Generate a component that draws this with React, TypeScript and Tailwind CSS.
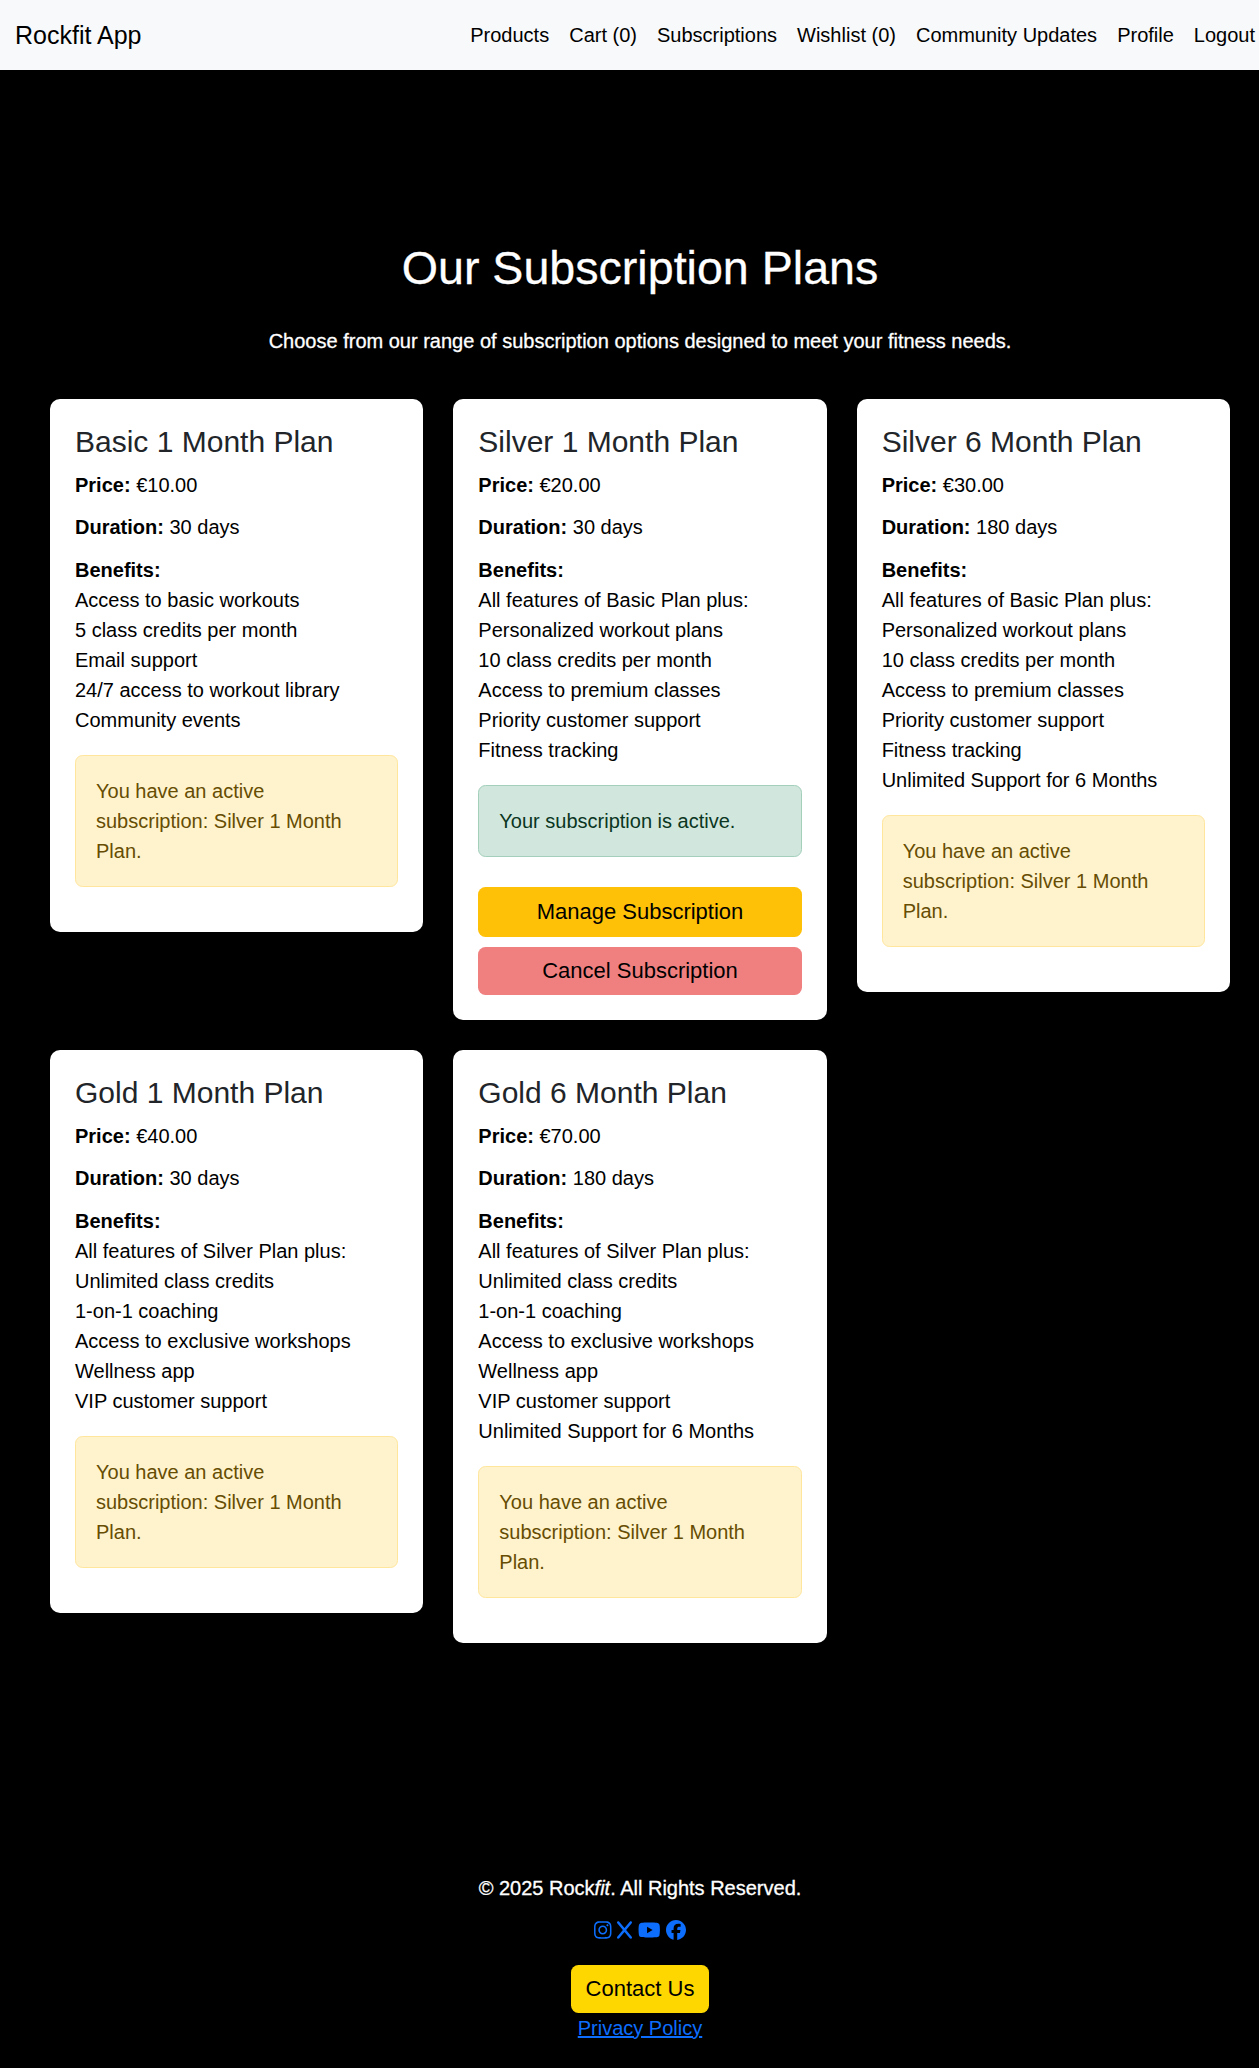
import React from "react";
import { FaInstagram, FaYoutube, FaFacebook, FaX } from "react-icons/fa6";

type Plan = {
  name: string;
  price: string;
  days: number;
  benefits: string[];
  active?: boolean;
};

const silver = [
  "All features of Basic Plan plus:",
  "Personalized workout plans",
  "10 class credits per month",
  "Access to premium classes",
  "Priority customer support",
  "Fitness tracking",
];

const gold = [
  "All features of Silver Plan plus:",
  "Unlimited class credits",
  "1-on-1 coaching",
  "Access to exclusive workshops",
  "Wellness app",
  "VIP customer support",
];

const plans: Plan[] = [
  {
    name: "Basic 1 Month Plan",
    price: "€10.00",
    days: 30,
    benefits: [
      "Access to basic workouts",
      "5 class credits per month",
      "Email support",
      "24/7 access to workout library",
      "Community events",
    ],
  },
  { name: "Silver 1 Month Plan", price: "€20.00", days: 30, benefits: silver, active: true },
  { name: "Silver 6 Month Plan", price: "€30.00", days: 180, benefits: [...silver, "Unlimited Support for 6 Months"] },
  { name: "Gold 1 Month Plan", price: "€40.00", days: 30, benefits: gold },
  { name: "Gold 6 Month Plan", price: "€70.00", days: 180, benefits: [...gold, "Unlimited Support for 6 Months"] },
];

const links = ["Products", "Cart (0)", "Subscriptions", "Wishlist (0)", "Community Updates", "Profile", "Logout"];

function PlanCard({ plan }: { plan: Plan }) {
  return (
    <article className="rounded-[10px] bg-white p-[25px] text-black">
      <h2 className="mb-2.5 text-[30px] leading-9 text-[#212529]">{plan.name}</h2>
      <p className="mb-3">
        <strong>Price:</strong> {plan.price}
      </p>
      <p className="mb-[13px]">
        <strong>Duration:</strong> {plan.days} days
      </p>
      <p className="font-bold">Benefits:</p>
      <ul>
        {plan.benefits.map((b) => (
          <li key={b}>{b}</li>
        ))}
      </ul>
      {plan.active ? (
        <>
          <div className="mt-5 rounded-[7.5px] border border-[#a3cfbb] bg-[#d1e7dd] p-5 text-[#0a3622]">
            Your subscription is active.
          </div>
          <button className="mt-[30px] block h-[50px] w-full rounded-[7.5px] bg-[#ffc107] text-[22px]">
            Manage Subscription
          </button>
          <button className="mt-2.5 block h-12 w-full rounded-[7.5px] bg-[#f08080] text-[22px]">
            Cancel Subscription
          </button>
        </>
      ) : (
        <div className="my-5 rounded-[7.5px] border border-[#ffe69c] bg-[#fff3cd] p-5 text-[#664d03]">
          You have an active subscription: Silver 1 Month Plan.
        </div>
      )}
    </article>
  );
}

export default function App() {
  return (
    <div className="flex h-[2068px] w-[1259px] flex-col overflow-hidden bg-black font-['Liberation_Sans',Arial,sans-serif] text-[20px] leading-[30px] text-white">
      <header className="flex h-[70px] shrink-0 items-center justify-between bg-[#f8f9fa] pr-1 pl-[15px] text-black">
        <a className="text-[25px]">Rockfit App</a>
        <nav className="flex gap-5">
          {links.map((l) => (
            <a key={l}>{l}</a>
          ))}
        </nav>
      </header>
      <main className="pt-[169px] pr-[29px] pl-[50px]">
        <h1 className="text-center text-[46.6px] leading-[58px] [-webkit-text-stroke:0.3px_white]">
          Our Subscription Plans
        </h1>
        <p className="mt-[29px] text-center [-webkit-text-stroke:0.3px_white]">
          Choose from our range of subscription options designed to meet your fitness needs.
        </p>
        <section className="mt-[43px] grid grid-cols-3 items-start gap-[30px]">
          {plans.map((p) => (
            <PlanCard key={p.name} plan={p} />
          ))}
        </section>
      </main>
      <footer className="mt-[230px] flex flex-col items-center pl-[21px]">
        <p className="[-webkit-text-stroke:0.3px_white]">
          © 2025 Rock<em>fit</em>. All Rights Reserved.
        </p>
        <div className="mt-[17px] flex items-center gap-[5.5px] text-[#0d6efd]">
          <FaInstagram className="h-5 w-[17.5px]" />
          <FaX className="h-5 w-[15px]" />
          <FaYoutube className="h-5 w-[22.5px]" />
          <FaFacebook className="h-5 w-5" />
        </div>
        <button className="mt-[25px] h-12 rounded-[7.5px] bg-[#ffd700] px-[15px] text-[22px] text-black">
          Contact Us
        </button>
        <a className="text-[#0d6efd] underline">Privacy Policy</a>
      </footer>
    </div>
  );
}
